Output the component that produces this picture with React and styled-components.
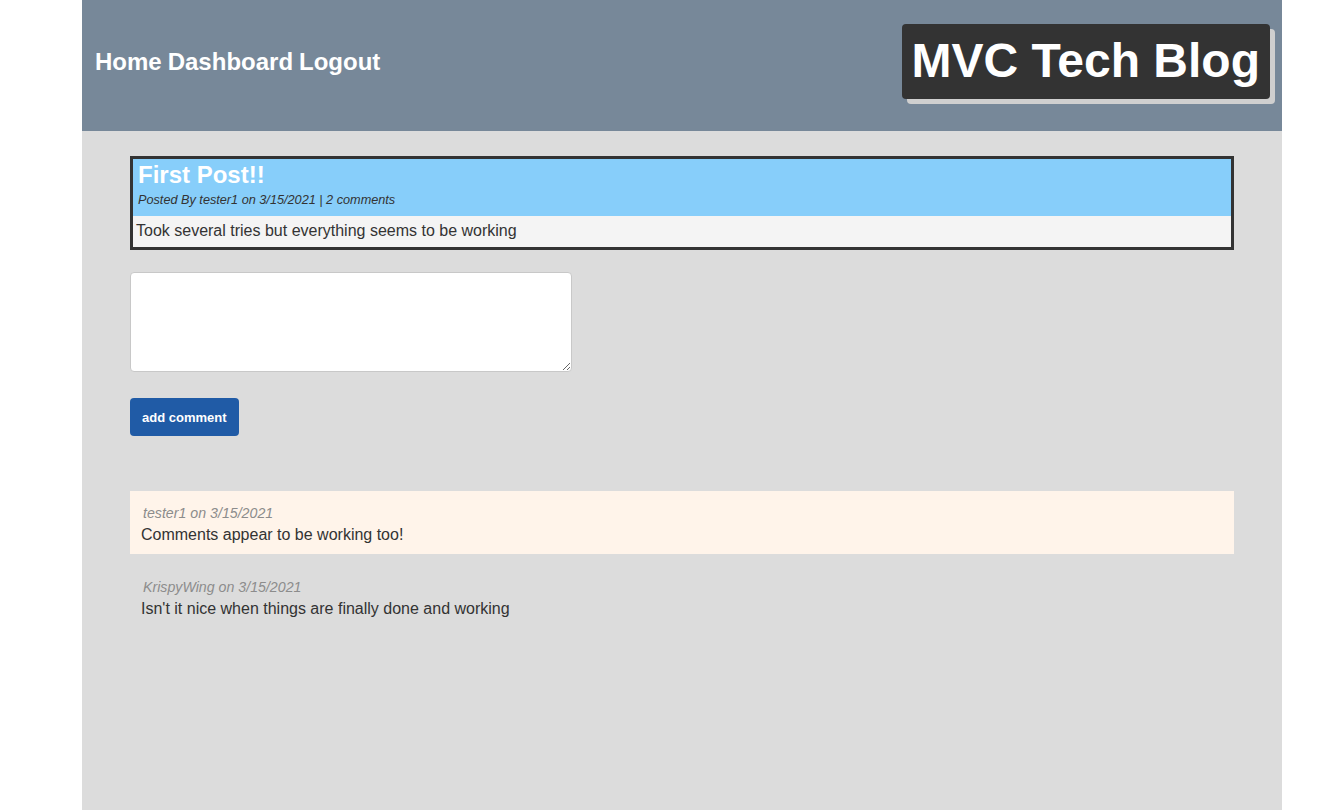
import React from 'react'
import styled, { createGlobalStyle } from 'styled-components'

const GlobalStyle = createGlobalStyle`
  html, body {
    margin: 0;
    padding: 0;
    background: #ffffff;
    font-family: "Liberation Sans", Arial, sans-serif;
  }
`

const Page = styled.div`
  width: 1200px;
  min-height: 810px;
  margin-left: 82px;
  background: #dcdcdc;
  display: flex;
  flex-direction: column;
`

const Header = styled.header`
  height: 131px;
  background: #778899;
  display: flex;
  align-items: center;
  justify-content: space-between;
  padding: 0 12px 0 13px;
  box-sizing: border-box;
`

const Nav = styled.nav`
  display: flex;
  gap: 6px;
  margin-top: -8px;
  a {
    color: #fff;
    font-size: 24px;
    font-weight: bold;
    text-decoration: none;
  }
`

const Title = styled.h1`
  margin: 0 0 8px 0;
  background: #333;
  color: #fff;
  font-size: 48px;
  font-weight: bold;
  padding: 8px 10px 9px 10px;
  line-height: 58px;
  border-radius: 4px;
  box-shadow: 5px 5px 0 #cfcfcf;
`

const Main = styled.main`
  padding: 25px 48px;
  display: flex;
  flex-direction: column;
  align-items: flex-start;
`

const PostCard = styled.article`
  width: 100%;
  box-sizing: border-box;
  border: 3px solid #333;
`

const PostHead = styled.div`
  background: #87cefa;
  padding: 2px 5px 8px;
  h2 {
    margin: 0;
    color: #fff;
    font-size: 24px;
    line-height: 28px;
  }
  p {
    margin: 4px 0 0;
    color: #333;
    font-size: 12.7px;
    line-height: 15px;
    font-style: italic;
  }
`

const PostBody = styled.div`
  background: #f4f4f4;
  color: #333;
  font-size: 16px;
  padding: 6px 3px 7px;
  line-height: 18px;
`

const Form = styled.form`
  margin-top: 22px;
  display: flex;
  flex-direction: column;
  align-items: flex-start;
  gap: 26px;
`

const TextArea = styled.textarea`
  width: 442px;
  height: 100px;
  box-sizing: border-box;
  border: 1px solid #c8c8c8;
  border-radius: 4px;
  background: #fff;
  resize: vertical;
  font-family: inherit;
`

const Button = styled.button`
  background: #205ba6;
  color: #fff;
  border: none;
  border-radius: 4px;
  font-family: "Liberation Sans", Arial, sans-serif;
  font-weight: bold;
  font-size: 13px;
  height: 38px;
  padding: 0 12px;
`

const CommentList = styled.section`
  margin-top: 55px;
  width: 100%;
  display: flex;
  flex-direction: column;
`

const Comment = styled.div`
  background: ${(p) => (p.$highlight ? '#fff4ea' : 'transparent')};
  padding: 13px 11px 10px;
  height: 63px;
  box-sizing: border-box;
  margin-bottom: 11px;
  .meta {
    color: #8c8c8c;
    font-size: 14.2px;
    font-style: italic;
    margin: 0 0 3px 2px;
    line-height: 18px;
  }
  .text {
    color: #333;
    font-size: 16px;
    margin: 0;
    line-height: 20px;
  }
`

const comments = [
  { user: 'tester1', date: '3/15/2021', text: 'Comments appear to be working too!' },
  { user: 'KrispyWing', date: '3/15/2021', text: "Isn't it nice when things are finally done and working" },
]

const App = () => {
  return (
    <>
      <GlobalStyle />
      <Page>
        <Header>
          <Nav>
            <a href="#">Home</a>
            <a href="#">Dashboard</a>
            <a href="#">Logout</a>
          </Nav>
          <Title>MVC Tech Blog</Title>
        </Header>
        <Main>
          <PostCard>
            <PostHead>
              <h2>First Post!!</h2>
              <p>Posted By tester1 on 3/15/2021 | 2 comments</p>
            </PostHead>
            <PostBody>Took several tries but everything seems to be working</PostBody>
          </PostCard>
          <Form onSubmit={(e) => e.preventDefault()}>
            <TextArea />
            <Button type="submit">add comment</Button>
          </Form>
          <CommentList>
            {comments.map((c, i) => (
              <Comment key={i} $highlight={i % 2 === 0}>
                <p className="meta">
                  {c.user} on {c.date}
                </p>
                <p className="text">{c.text}</p>
              </Comment>
            ))}
          </CommentList>
        </Main>
      </Page>
    </>
  )
}

export default App
